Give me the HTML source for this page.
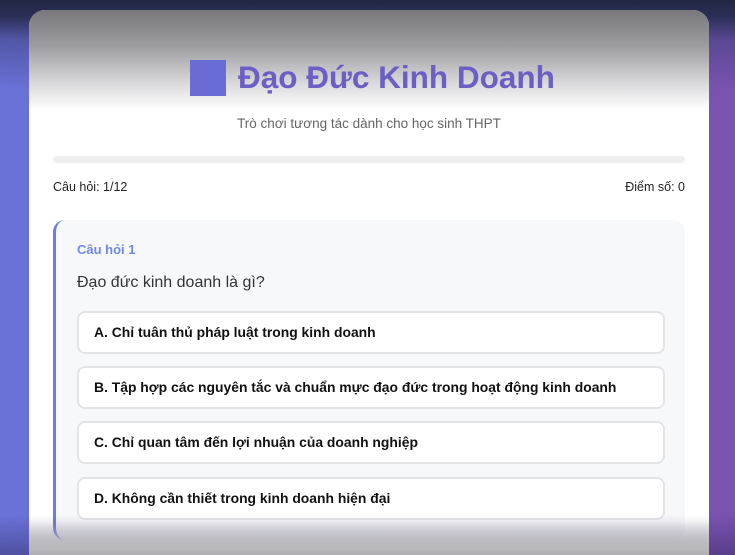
<!DOCTYPE html>
<html><head><meta charset="utf-8"><style>
*{margin:0;padding:0;box-sizing:border-box}
html,body{width:735px;height:555px;overflow:hidden}
body{font-family:"Liberation Sans","DejaVu Sans",sans-serif;position:relative;
background:linear-gradient(90deg,#6a72d8 0%,#6e62c4 50%,#7a52b0 100%);}
.topshade{position:absolute;left:0;top:0;width:735px;height:200px;background:linear-gradient(180deg,#232744 0%,#2a2e55 8%,rgba(60,60,120,0.5) 20%,rgba(0,0,0,0) 45%)}
.botshade{position:absolute;left:0;bottom:0;width:735px;height:40px;background:linear-gradient(180deg,rgba(0,0,0,0),rgba(40,30,80,0.4))}
.card{position:absolute;left:29px;top:10px;width:680px;height:560px;background:#fff;border-radius:16px;overflow:hidden}
.cshade{position:absolute;left:0;top:0;width:100%;height:100px;background:linear-gradient(180deg,#78787c 0%,#9c9ca0 35%,#dcdcde 75%,#fff 100%)}
.cbot{position:absolute;left:0;top:512px;width:100%;height:40px;background:linear-gradient(180deg,rgba(255,255,255,0),#b8b8bc 70%,#a0a0a4);z-index:5}
.sq{position:absolute;left:161px;top:50px;width:36px;height:36px;background:#6a6bd4}
.title{position:absolute;left:209px;top:49px;font-size:31.5px;font-weight:bold;color:#6b5ec4;letter-spacing:0px}
.sub{position:absolute;left:0;width:100%;top:106px;text-align:center;font-size:13.5px;color:#666}
.bar{position:absolute;left:24px;top:146px;width:632px;height:7px;background:#efefef;border-radius:4px}
.l{position:absolute;left:24px;top:170px;font-size:12.5px;color:#222}
.r{position:absolute;right:24px;top:170px;font-size:12.5px;color:#222}
.q{position:absolute;left:24px;top:210px;width:632px;height:320px;background:#f7f8fa;border-left:3px solid #6a7fe0;border-radius:12px}
.qn{position:absolute;left:21px;top:22px;font-size:13px;font-weight:bold;color:#7088e6}
.qt{position:absolute;left:21px;top:54px;font-size:16px;color:#333}
.o{position:absolute;left:21px;width:588px;height:43px;background:#fff;border:2px solid #e4e4e6;border-radius:8px;font-size:13.9px;font-weight:bold;color:#111;padding:11px 0 0 15px}
</style></head><body>
<div class="topshade"></div>
<div class="card">
<div class="cshade"></div>
<div class="sq"></div>
<div class="title">Đạo Đức Kinh Doanh</div>
<div class="sub">Trò chơi tương tác dành cho học sinh THPT</div>
<div class="bar"></div>
<div class="l">Câu hỏi: 1/12</div>
<div class="r">Điểm số: 0</div>
<div class="q">
<div class="qn">Câu hỏi 1</div>
<div class="qt">Đạo đức kinh doanh là gì?</div>
<div class="o" style="top:91px">A. Chỉ tuân thủ pháp luật trong kinh doanh</div>
<div class="o" style="top:146px">B. Tập hợp các nguyên tắc và chuẩn mực đạo đức trong hoạt động kinh doanh</div>
<div class="o" style="top:201px">C. Chỉ quan tâm đến lợi nhuận của doanh nghiệp</div>
<div class="o" style="top:257px">D. Không cần thiết trong kinh doanh hiện đại</div>
</div>
<div class="cbot"></div>
</div>
<div class="botshade"></div>
</body></html>
